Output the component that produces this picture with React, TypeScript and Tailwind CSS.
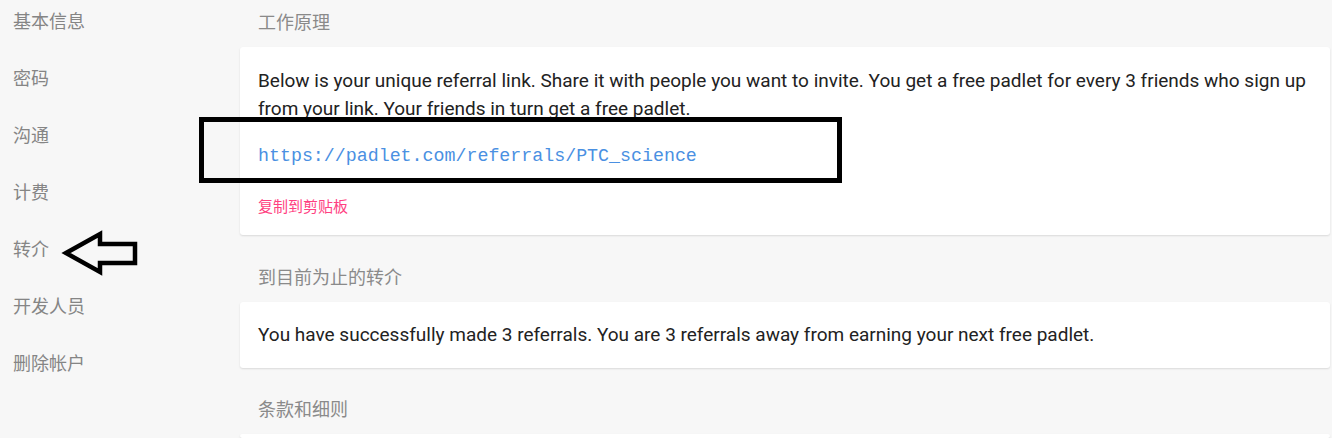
const navItems = ['基本信息', '密码', '沟通', '计费', '转介', '开发人员', '删除帐户'];

const cjk = "font-['Roboto','Noto_Sans_CJK_SC',sans-serif]";

const SectionTitle = ({ children }: { children: React.ReactNode }) => (
  <h2 className={`px-[18px] pb-[10px] text-[18px] leading-7 text-[#8a8a8a] ${cjk}`}>{children}</h2>
);

const Card = ({ children, className = '' }: { children: React.ReactNode; className?: string }) => (
  <div className={`rounded-[3px] bg-white px-[18px] shadow-[0_1px_2px_rgba(0,0,0,0.12)] ${className}`}>
    {children}
  </div>
);

const App = () => {
  return (
    <div className={`relative flex h-[438px] w-full overflow-hidden bg-[#f7f7f7] ${cjk}`}>
      <nav className="flex w-[240px] shrink-0 flex-col gap-[29px] pl-[13px] pt-2">
        {navItems.map((item) => (
          <a key={item} className="text-[18px] leading-7 text-[#858585]">
            {item}
          </a>
        ))}
      </nav>

      <main className="flex flex-1 flex-col pr-[2px] pt-[9px]">
        <SectionTitle>工作原理</SectionTitle>
        <Card className="pb-[18px] pt-5">
          <p className="text-[19px] leading-7 text-[#222]">
            Below is your unique referral link. Share it with people you want to invite. You get a free padlet for every 3
            friends who sign up from your link. Your friends in turn get a free padlet.
          </p>
          <div className="mt-[19px] font-['Liberation_Mono',monospace] text-[18.3px] leading-7 text-[#4a90e2]">
            https://padlet.com/referrals/PTC_science
          </div>
          <button className="mt-[27px] block text-[15px] leading-5 text-[#ff4081]">复制到剪贴板</button>
        </Card>

        <div className="pt-[29px]">
          <SectionTitle>到目前为止的转介</SectionTitle>
        </div>
        <Card className="pb-[19px] pt-[19px]">
          <p className="text-[19px] leading-7 text-[#222]">
            You have successfully made 3 referrals. You are 3 referrals away from earning your next free padlet.
          </p>
        </Card>

        <div className="pt-7">
          <SectionTitle>条款和细则</SectionTitle>
        </div>
        <Card className="h-10">
          <span />
        </Card>
      </main>

      {/* annotation overlays */}
      <div className="pointer-events-none absolute left-[199px] top-[117px] h-[66px] w-[643px] border-[5px] border-black" />
      <svg className="pointer-events-none absolute left-0 top-0" width="160" height="300" viewBox="0 0 160 300">
        <polygon
          points="66,253 100,234 100,244 135,244 135,263 100,263 100,272"
          fill="none"
          stroke="black"
          strokeWidth="4.5"
          strokeLinejoin="miter"
        />
      </svg>
    </div>
  );
};

export default App;
